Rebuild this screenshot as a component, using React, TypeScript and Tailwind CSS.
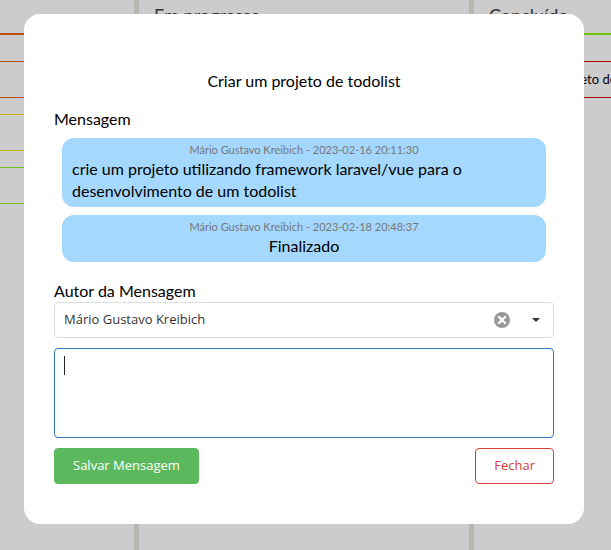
import { useState, type ReactNode } from "react";

function Column({ title, className, children }: { title: string; className: string; children?: ReactNode }) {
  return (
    <section className={`shrink-0 overflow-hidden ${className}`}>
      <h2 className="h-[33px] px-[15px] pt-[3px] text-[18px] leading-6 text-[#333]">{title}</h2>
      {children}
    </section>
  );
}

function Card({ className, children }: { className: string; children?: ReactNode }) {
  return (
    <div className={`mb-4 h-[37px] overflow-hidden border-y text-[13px] leading-[35px] whitespace-nowrap ${className}`}>
      {children}
    </div>
  );
}

function Message({ meta, children }: { meta: string; children: ReactNode }) {
  return (
    <li className="flex flex-col items-center rounded-[12px] bg-[#a5d8ff] px-[10px] pt-1 pb-[5px]">
      <span className="text-[11px] leading-4 text-[#777]">{meta}</span>
      <p className="text-[16px] leading-[22px]">{children}</p>
    </li>
  );
}

export default function App() {
  const [author, setAuthor] = useState("mario");
  const [text, setText] = useState("");
  return (
    <div className="h-screen overflow-hidden bg-[#ccc] font-[Lato,sans-serif] text-black">
      <div className="flex h-full">
        <Column title="" className="w-[134px]">
          <div className="mb-[26px] h-[2px] bg-[#b85000]" />
          <Card className="border-[#b85000]" />
          <Card className="border-[#c4b400]" />
          <Card className="border-[#6fbf14]" />
        </Column>
        <Column title="Em progresso" className="w-[335px] border-l-[5px] border-[#b8b8b2]" />
        <Column title="Concluído" className="w-[335px] border-l-[5px] border-[#b8b8b2]">
          <div className="mb-[26px] h-[2px] bg-[#70c800]" />
          <Card className="border-[#b00000] pl-[32px]">Criar um projeto de todolist</Card>
        </Column>
      </div>

      <div className="fixed inset-0 flex items-start pt-[14px] pr-[27px] pl-6">
        <div role="dialog" aria-labelledby="task-title" className="w-full rounded-[16px] bg-white px-[30px] pt-14 pb-10">
          <h1 id="task-title" className="text-center text-[16px] leading-[22px]">
            Criar um projeto de todolist
          </h1>
          <h2 className="mt-4 text-[16px] leading-[22px]">Mensagem</h2>
          <ul className="mt-2 flex flex-col gap-2 px-2">
            <Message meta="Mário Gustavo Kreibich - 2023-02-16 20:11:30">
              crie um projeto utilizando framework laravel/vue para o desenvolvimento de um todolist
            </Message>
            <Message meta="Mário Gustavo Kreibich - 2023-02-18 20:48:37">Finalizado</Message>
          </ul>
          <label htmlFor="author" className="mt-[18px] block text-[16px] leading-[22px]">
            Autor da Mensagem
          </label>
          <div className="relative font-['Open_Sans',sans-serif] text-[13px]">
            <select
              id="author"
              value={author}
              onChange={(e) => setAuthor(e.target.value)}
              className="block h-9 w-full appearance-none rounded-[4px] border border-[#ddd] bg-white px-[9px] text-[#333]"
            >
              <option value="" />
              <option value="mario">Mário Gustavo Kreibich</option>
            </select>
            <button
              type="button"
              aria-label="Limpar autor"
              onClick={() => setAuthor("")}
              className="absolute top-[10px] right-[44px] size-4"
            >
              <svg viewBox="0 0 16 16" className="size-4">
                <circle cx="8" cy="8" r="8" fill="#999" />
                <path d="M4.3 4.3l7.4 7.4M11.7 4.3l-7.4 7.4" stroke="#fff" strokeWidth="2.3" />
              </svg>
            </button>
            <svg viewBox="0 0 8 4" className="pointer-events-none absolute top-4 right-[14px] h-1 w-2">
              <path d="M0 0h8L4 4z" fill="#333" />
            </svg>
          </div>
          <div className="relative mt-[10px]">
            <textarea
              aria-label="Nova mensagem"
              value={text}
              onChange={(e) => setText(e.target.value)}
              className="block h-[90px] w-full resize-none rounded-[4px] border border-[#337ab7] px-[9px] py-[7px] font-['Open_Sans',sans-serif] text-[13px] leading-5 outline-none"
            />
            {text === "" && <span className="pointer-events-none absolute top-2 left-[10px] h-[19px] w-px bg-[#222]" />}
          </div>
          <div className="mt-[10px] flex justify-between font-['Open_Sans',sans-serif] text-[13px]">
            <button type="button" className="h-9 rounded-[4px] border border-[#5cb85c] bg-[#5cb85c] px-[18px] text-white">
              Salvar Mensagem
            </button>
            <button type="button" className="h-9 rounded-[4px] border border-[#d43f3a] px-[18px] text-[#d43f3a]">
              Fechar
            </button>
          </div>
        </div>
      </div>
    </div>
  );
}
